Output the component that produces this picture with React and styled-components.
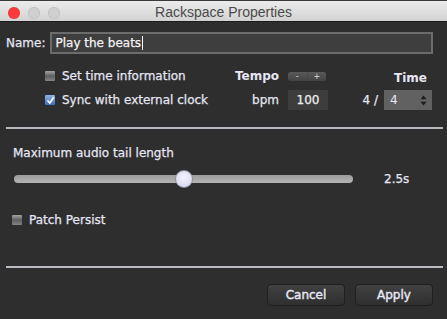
import React, { useState } from 'react'
import styled, { createGlobalStyle } from 'styled-components'

const GlobalStyle = createGlobalStyle`
html, body {
  margin: 0;
  padding: 0;
  background: #2e2e2e;
}
body {
  font-family: 'DejaVu Sans', 'Liberation Sans', sans-serif;
}
`

function CheckBox({ checked }) {
  return (
    <Box checked={checked}>
      {checked ? (
        <svg width="9" height="9" viewBox="0 0 9 9">
          <path d="M1.5 4.5 L3.8 7 L7.8 1.2" stroke="#fff" strokeWidth="1.6" fill="none" />
        </svg>
      ) : null}
    </Box>
  )
}

function App() {
  const [name] = useState('Play the beats')
  const [tail] = useState(50)

  return (
    <>
      <GlobalStyle />
      <Window>
        <TitleBar>
          <Lights>
            <Light color="#fc3a3b" />
            <Light color="#cfcfcf" />
            <Light color="#cfcfcf" />
          </Lights>
          <Title>Rackspace Properties</Title>
        </TitleBar>

        <Body>
          <NameRow>
            <Label>Name:</Label>
            <NameField>
              <NameText>{name}</NameText>
              <Caret />
            </NameField>
          </NameRow>

          <TimingGrid>
            <CheckItem>
              <CheckBox />
              <Label>Set time information</Label>
            </CheckItem>
            <BoldLabel>Tempo</BoldLabel>
            <Stepper>
              <StepBtn>-</StepBtn>
              <StepBtn>+</StepBtn>
            </Stepper>
            <TimeHead>
              <BoldLabel>Time</BoldLabel>
            </TimeHead>

            <CheckItem>
              <CheckBox checked />
              <Label>Sync with external clock</Label>
            </CheckItem>
            <RightLabel>bpm</RightLabel>
            <NumBox>100</NumBox>
            <TimeSig>
              <Label>4 /</Label>
              <Select>
                <span>4</span>
                <svg width="7" height="11" viewBox="0 0 7 11">
                  <path d="M3.5 0.5 L6.5 4.2 H0.5 Z M3.5 10.5 L6.5 6.8 H0.5 Z" fill="#1d1d1d" />
                </svg>
              </Select>
            </TimeSig>
          </TimingGrid>

          <Divider />

          <TailSection>
            <Label>Maximum audio tail length</Label>
            <SliderRow>
              <Track>
                <Thumb style={{ left: `${tail}%` }} />
              </Track>
              <Label>2.5s</Label>
            </SliderRow>
          </TailSection>

          <PersistRow>
            <CheckBox />
            <Label>Patch Persist</Label>
          </PersistRow>

          <Divider />

          <Footer>
            <Button>Cancel</Button>
            <Button>Apply</Button>
          </Footer>
        </Body>
      </Window>
    </>
  )
}

export default App

const Window = styled.div`
width: 447px;
height: 319px;
background: #2e2e2e;
display: flex;
flex-direction: column;
overflow: hidden;
`

const TitleBar = styled.div`
height: 22px;
flex: none;
background: linear-gradient(#ececec, #d2d2d2);
border-top: 1px solid #3a3a3a;
border-bottom: 1px solid #1c1c1c;
box-sizing: border-box;
position: relative;
display: flex;
align-items: center;
justify-content: center;
`

const Lights = styled.div`
position: absolute;
left: 8px;
top: 6px;
display: flex;
gap: 8px;
`

const Light = styled.div`
width: 12px;
height: 12px;
border-radius: 50%;
background: ${(p) => p.color};
box-shadow: inset 0 0 0 0.5px rgba(0,0,0,0.12);
`

const Title = styled.div`
font-family: 'Liberation Sans', sans-serif;
font-size: 14px;
color: #4a4a4a;
margin-top: 1px;
`

const Body = styled.div`
flex: 1;
display: flex;
flex-direction: column;
padding: 0 4px 0 6px;
`

const Label = styled.span`
font-size: 12px;
color: #e6e6f4;
white-space: nowrap;
-webkit-text-stroke: 0.25px #e6e6f4;
`

const BoldLabel = styled(Label)`
font-weight: bold;
-webkit-text-stroke: 0;
`

const RightLabel = styled(Label)`
text-align: right;
`

const NameRow = styled.div`
display: flex;
align-items: center;
gap: 5px;
margin-top: 10px;
`

const NameField = styled.div`
flex: 1;
height: 22px;
box-sizing: border-box;
border: 2px solid #6c6c6c;
background: #3e3e3e;
display: flex;
align-items: center;
padding-left: 3px;
margin-right: 10px;
`

const NameText = styled.span`
font-size: 12px;
color: #f4f4f4;
white-space: nowrap;
-webkit-text-stroke: 0.25px #f4f4f4;
`

const Caret = styled.div`
width: 1px;
height: 14px;
background: #fff;
margin-left: 1px;
`

const TimingGrid = styled.div`
display: grid;
grid-template-columns: 181px 44px 46px 1fr;
grid-template-rows: 24px 24px;
align-items: center;
column-gap: 9px;
margin: 10px 0 15px;
padding-left: 39px;
`

const CheckItem = styled.div`
display: flex;
align-items: center;
gap: 7px;
`

const Box = styled.div`
width: 10px;
height: 10px;
flex: none;
border-radius: 1px;
display: flex;
align-items: center;
justify-content: center;
background: ${(p) => (p.checked
    ? 'linear-gradient(#8fb3e6, #3f6fc0)'
    : 'linear-gradient(#a4a4a4, #5e5e5e 50%, #858585)')};
`

const Stepper = styled.div`
display: flex;
width: 38px;
height: 9px;
border-radius: 3px;
overflow: hidden;
background: #4a4a4a;
gap: 1px;
`

const StepBtn = styled.div`
flex: 1;
background: linear-gradient(#5a5a5a, #434343);
color: #ddd;
font-size: 8px;
line-height: 9px;
text-align: center;
`

const TimeHead = styled.div`
text-align: right;
padding-right: 16px;
`

const NumBox = styled.div`
width: 40px;
height: 20px;
background: #3d3d3d;
color: #f0f0f0;
font-size: 12px;
-webkit-text-stroke: 0.25px #f0f0f0;
display: flex;
align-items: center;
justify-content: center;
`

const TimeSig = styled.div`
display: flex;
align-items: center;
justify-content: flex-end;
gap: 6px;
padding-right: 11px;
`

const Select = styled.div`
width: 48px;
height: 20px;
box-sizing: border-box;
background: #616161;
display: flex;
align-items: center;
justify-content: space-between;
padding: 0 5px 0 6px;
font-size: 12px;
color: #e8e8f6;
`

const Divider = styled.div`
height: 2px;
flex: none;
background: #b9b9c2;
`

const TailSection = styled.div`
display: flex;
flex-direction: column;
gap: 12px;
padding: 17px 0 0 7px;
`

const SliderRow = styled.div`
display: flex;
align-items: center;
gap: 31px;
padding-left: 1px;
`

const Track = styled.div`
position: relative;
width: 339px;
height: 8px;
border-radius: 4px;
background: linear-gradient(#9c9c9c, #b4b4b4);
`

const Thumb = styled.div`
position: absolute;
top: 50%;
width: 16px;
height: 16px;
border-radius: 50%;
transform: translate(-50%, -50%);
background: radial-gradient(circle at 50% 40%, #f2f2ff, #d4d4ec);
border: 1px solid #8e8e9e;
`

const PersistRow = styled.div`
display: flex;
align-items: center;
gap: 7px;
padding-left: 6px;
margin-top: 27px;
margin-bottom: 39px;
`

const Footer = styled.div`
display: flex;
justify-content: flex-end;
gap: 10px;
padding-right: 10px;
margin-top: 16px;
`

const Button = styled.button`
width: 78px;
height: 22px;
border-radius: 4px;
border: 1px solid #1e1e1e;
background: linear-gradient(#414141, #2f2f2f);
color: #e8e8f6;
font-family: 'DejaVu Sans', sans-serif;
font-size: 12px;
-webkit-text-stroke: 0.4px #e8e8f6;
padding: 0;
`
